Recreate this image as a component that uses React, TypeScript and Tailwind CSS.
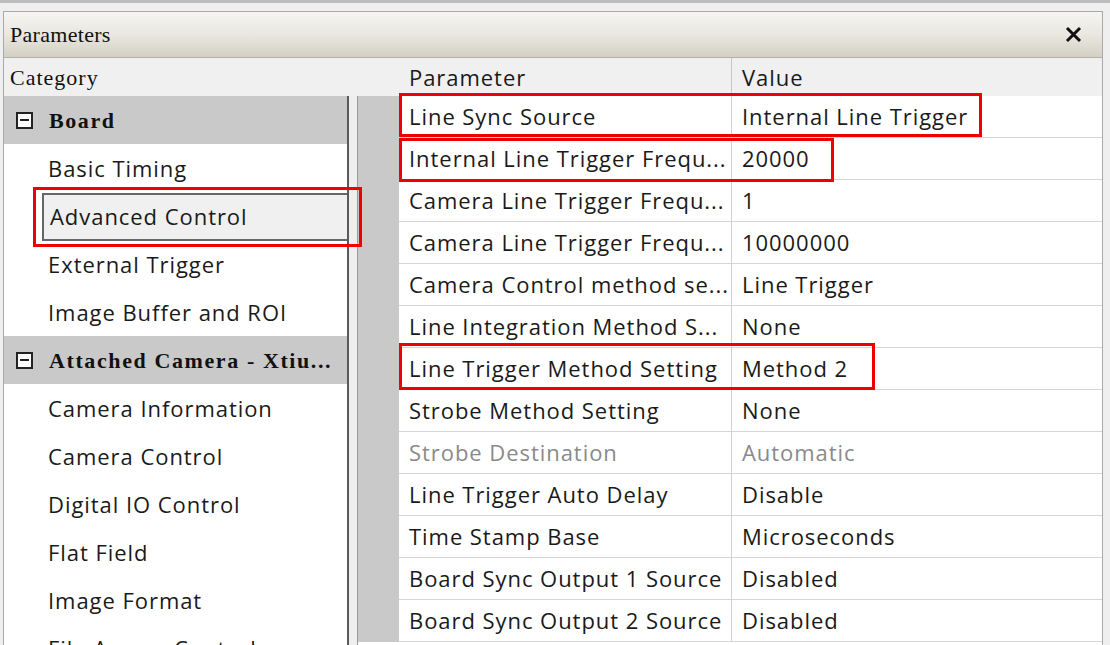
import React from 'react';

const sans = "font-['Open_Sans','Noto_Sans',sans-serif] text-[22px] tracking-[0.95px]";
const serif = "font-['Liberation_Serif','DejaVu_Serif',serif]";

type Row = { name: string; value: string; disabled?: boolean };

const rows: Row[] = [
  { name: 'Line Sync Source', value: 'Internal Line Trigger' },
  { name: 'Internal Line Trigger Frequ...', value: '20000' },
  { name: 'Camera Line Trigger Frequ...', value: '1' },
  { name: 'Camera Line Trigger Frequ...', value: '10000000' },
  { name: 'Camera Control method se...', value: 'Line Trigger' },
  { name: 'Line Integration Method S...', value: 'None' },
  { name: 'Line Trigger Method Setting', value: 'Method 2' },
  { name: 'Strobe Method Setting', value: 'None' },
  { name: 'Strobe Destination', value: 'Automatic', disabled: true },
  { name: 'Line Trigger Auto Delay', value: 'Disable' },
  { name: 'Time Stamp Base', value: 'Microseconds' },
  { name: 'Board Sync Output 1 Source', value: 'Disabled' },
  { name: 'Board Sync Output 2 Source', value: 'Disabled' },
];

function Collapse() {
  return (
    <span className="flex h-[17px] w-[17px] items-center justify-center border-2 border-[#222] bg-white">
      <span className="h-[2px] w-[9px] bg-[#222]" />
    </span>
  );
}

function Group({ label }: { label: string }) {
  return (
    <div className="flex h-[48px] items-center gap-[16px] bg-[#c9c9c9] pl-[12px]">
      <Collapse />
      <span className={`${serif} whitespace-nowrap text-[22px] font-bold tracking-[1.6px] text-[#111]`}>{label}</span>
    </div>
  );
}

function Item({ label, selected }: { label: string; selected?: boolean }) {
  if (selected) {
    return (
      <div className="flex h-[48px] items-center pl-[38px] pt-[1px]">
        <div className="flex h-[48px] flex-1 items-center border-2 border-r-0 border-[#666] bg-[#f0f0f0] pl-[6px]">
          <span className={`${sans} text-[#1a1a1a]`}>{label}</span>
        </div>
      </div>
    );
  }
  return (
    <div className="flex h-[48px] items-center pl-[44px]">
      <span className={`${sans} whitespace-nowrap text-[#1a1a1a]`}>{label}</span>
    </div>
  );
}

export default function App() {
  return (
    <div className="relative h-[645px] w-[1110px] overflow-hidden bg-[#efefef]">
      <div className="h-[11px] border-t-[3px] border-[#bdbdbd]" />
      <div className="ml-[3px] mr-[7px] border border-b-0 border-[#a9a9a9]">
        {/* title bar */}
        <div className="flex h-[46px] items-center justify-between border-b border-[#b3b0a6] bg-gradient-to-b from-[#f6f5f1] via-[#e9e7e0] to-[#d4d0c4] pl-[6px] pr-[20px]">
          <span className={`${serif} text-[22px] tracking-[0.3px] text-[#111]`}>Parameters</span>
          <svg width="17" height="17" viewBox="0 0 17 17">
            <path d="M2 2 L15 15 M15 2 L2 15" stroke="#111" strokeWidth="3" />
          </svg>
        </div>

        {/* header row */}
        <div className="flex h-[38px] items-center bg-[#f0f0f0]">
          <div className="w-[395px] pl-[6px]">
            <span className={`${serif} text-[22px] tracking-[1px] text-[#111]`}>Category</span>
          </div>
          <div className="flex h-full w-[332px] items-center pl-[10px]">
            <span className={`${sans} text-[#1a1a1a]`}>Parameter</span>
          </div>
          <div className="flex h-full items-center border-l border-[#c8c8c8] pl-[10px]">
            <span className={`${sans} text-[#1a1a1a]`}>Value</span>
          </div>
        </div>

        {/* body */}
        <div className="flex h-[560px] bg-[#efefef]">
          <div className="w-[345px] overflow-hidden border-r-2 border-[#5a5a5a] bg-white">
            <Group label="Board" />
            <Item label="Basic Timing" />
            <Item label="Advanced Control" selected />
            <Item label="External Trigger" />
            <Item label="Image Buffer and ROI" />
            <Group label="Attached Camera - Xtiu..." />
            <Item label="Camera Information" />
            <Item label="Camera Control" />
            <Item label="Digital IO Control" />
            <Item label="Flat Field" />
            <Item label="Image Format" />
            <Item label="File Access Control" />
          </div>
          <div className="ml-[8px] flex flex-1 flex-col border-l border-[#9a9a9a] bg-white">
            <div className="flex">
              <div className="w-[41px] shrink-0 bg-[#c9c9c9]" />
              <div className="flex-1">
                {rows.map((r, i) => (
                  <div key={i} className="flex h-[42px] border-b border-[#d6d6d6]">
                    <div className="flex w-[332px] items-center overflow-hidden pl-[10px]">
                      <span className={`${sans} whitespace-nowrap ${r.disabled ? 'text-[#8a8a8a]' : 'text-[#1a1a1a]'}`}>
                        {r.name}
                      </span>
                    </div>
                    <div className="flex flex-1 items-center border-l border-[#d0d0d0] pl-[10px]">
                      <span className={`${sans} whitespace-nowrap ${r.disabled ? 'text-[#8a8a8a]' : 'text-[#1a1a1a]'}`}>
                        {r.value}
                      </span>
                    </div>
                  </div>
                ))}
              </div>
            </div>
          </div>
        </div>
      </div>

      {/* red annotation boxes */}
      <div className="absolute left-[399px] top-[93px] h-[44px] w-[583px] border-[3px] border-[#ee0000]" />
      <div className="absolute left-[399px] top-[138px] h-[44px] w-[435px] border-[3px] border-[#ee0000]" />
      <div className="absolute left-[33px] top-[187px] h-[60px] w-[329px] border-[3px] border-[#ee0000]" />
      <div className="absolute left-[399px] top-[343px] h-[47px] w-[476px] border-[3px] border-[#ee0000]" />
    </div>
  );
}
